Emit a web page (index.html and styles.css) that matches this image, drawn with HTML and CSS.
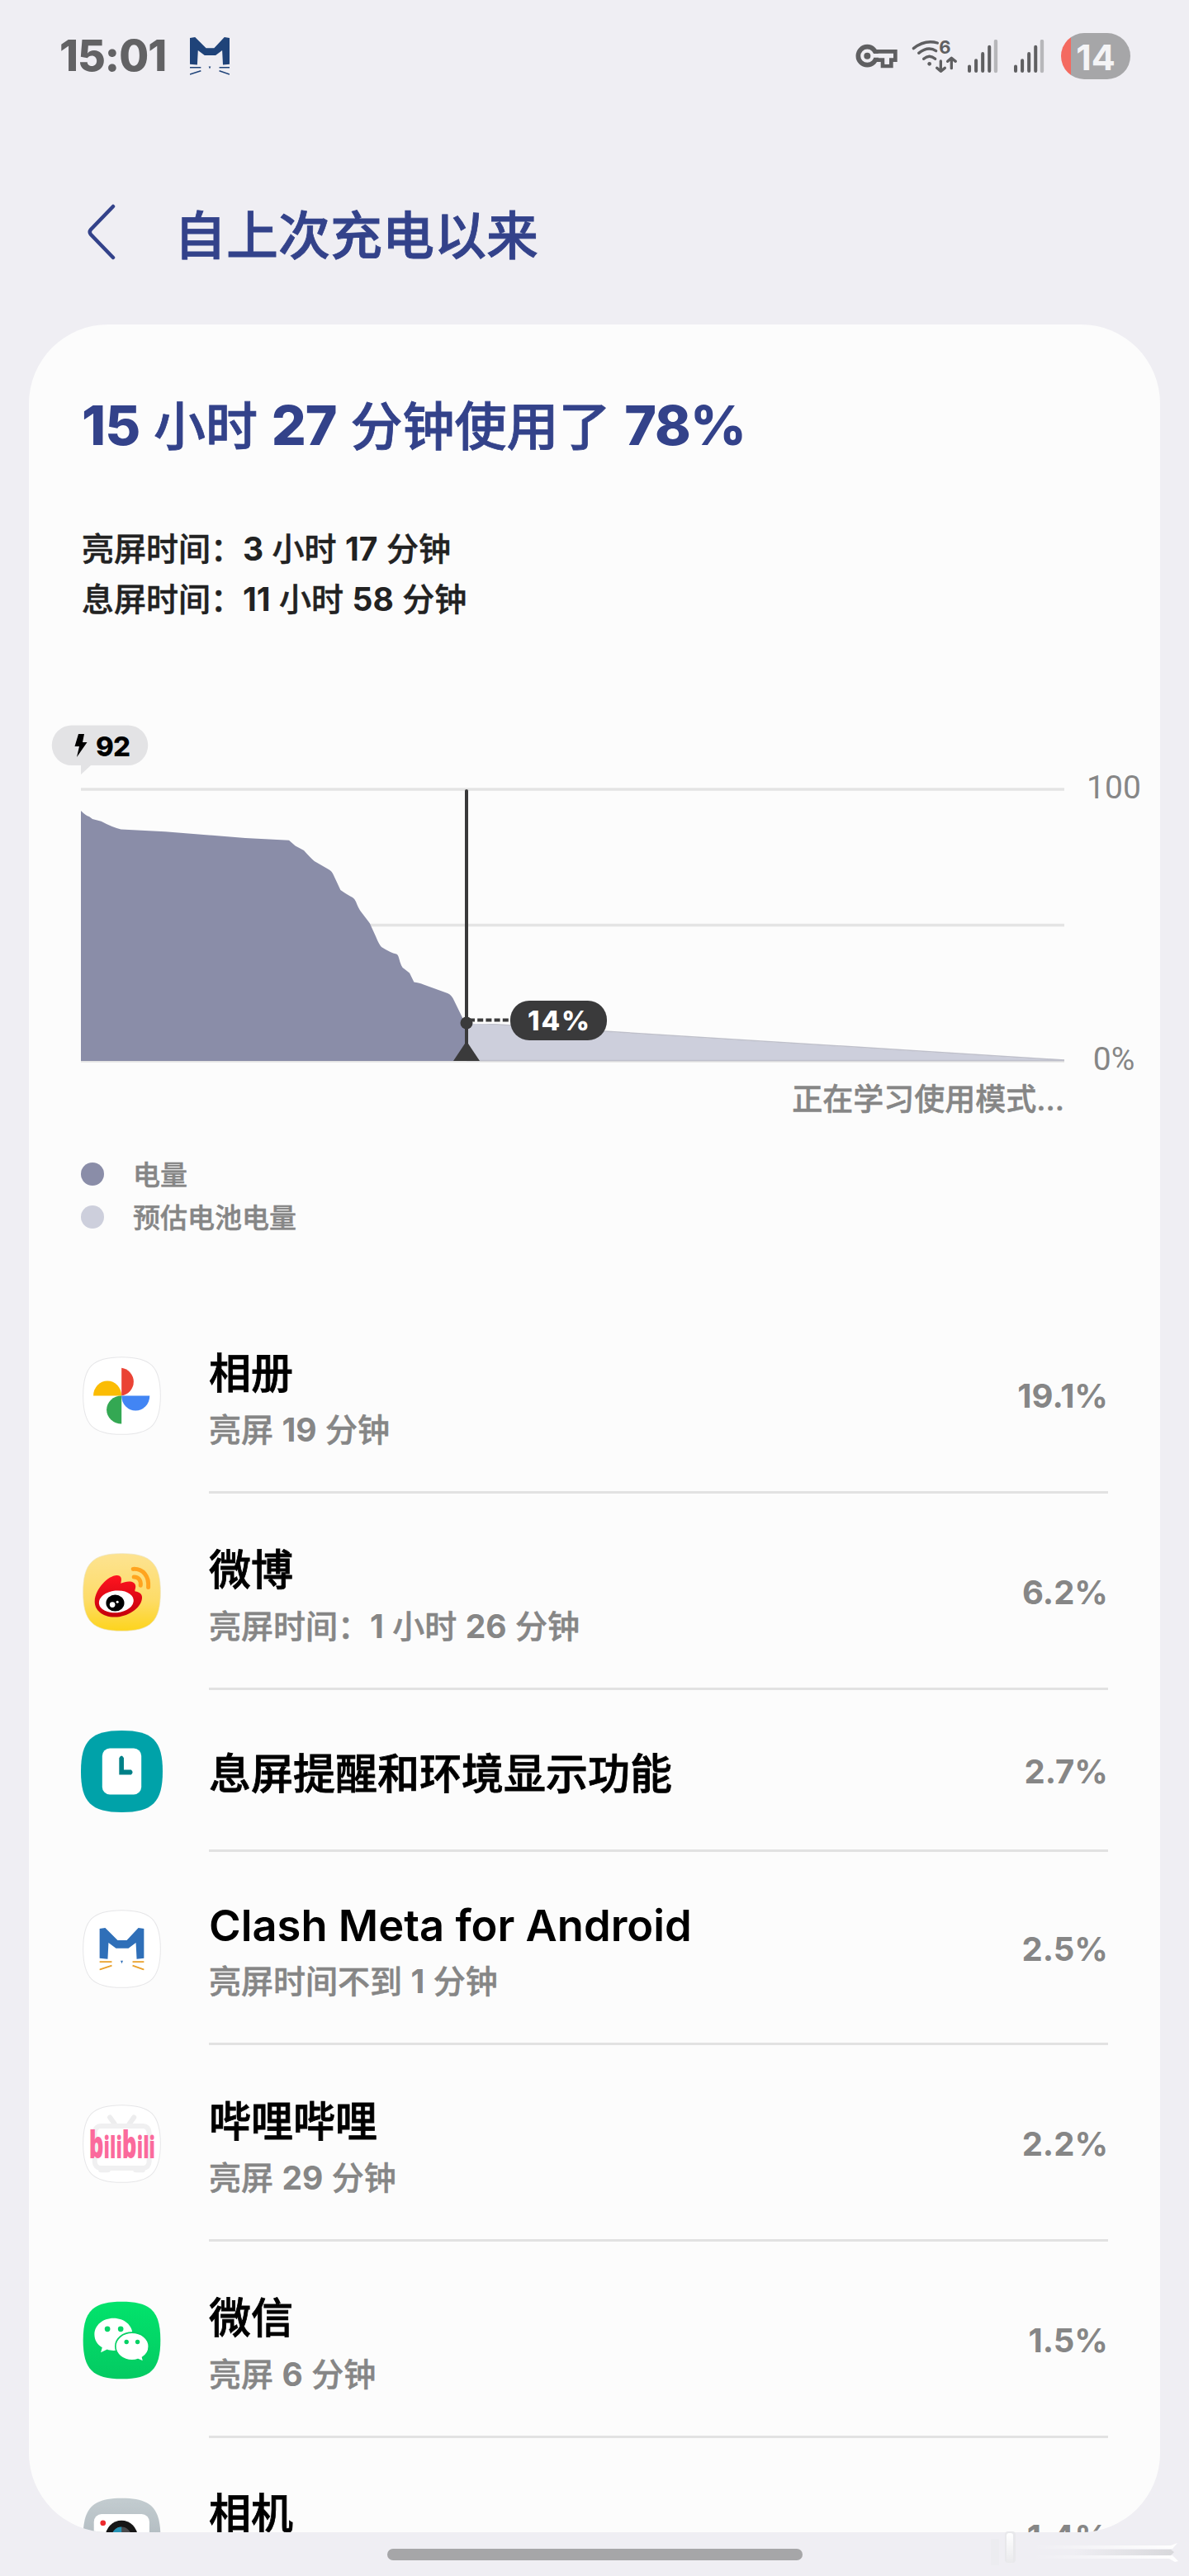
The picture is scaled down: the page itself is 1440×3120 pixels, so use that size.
FILE: index.html
```html
<!DOCTYPE html>
<html lang="zh-CN">
<head>
  <meta charset="utf-8">
  <meta name="viewport" content="width=device-width,initial-scale=1">
  <title>自上次充电以来</title>
  <link rel="stylesheet" href="styles.css">
</head>
<body>
  <!-- Shared shapes -->
  <svg class="defs" width="0" height="0">
    <defs>
      <linearGradient id="weibo-bg" x1="0" y1="0" x2="0" y2="1">
        <stop offset="0" stop-color="#fde391"/><stop offset=".6" stop-color="#fddc68"/><stop offset="1" stop-color="#fdd41c"/>
      </linearGradient>
      <linearGradient id="weibo-body" x1="0" y1="0" x2="0" y2="1">
        <stop offset="0" stop-color="#ff1420"/><stop offset="1" stop-color="#c4000c"/>
      </linearGradient>
      <linearGradient id="wechat-bg" x1="0" y1="0" x2="0" y2="1">
        <stop offset="0" stop-color="#02e36c"/><stop offset="1" stop-color="#04ca62"/>
      </linearGradient>
      <linearGradient id="camera-bg" x1="0" y1="0" x2="0" y2="1">
        <stop offset="0" stop-color="#c3ccd0"/><stop offset="1" stop-color="#a3adb3"/>
      </linearGradient>
      <symbol id="squircle" viewBox="-2 -2 284 284">
        <path d="M0 140C0 35 35 0 140 0S280 35 280 140 245 280 140 280 0 245 0 140Z"/>
      </symbol>
      <symbol id="cat" viewBox="0 0 54 52" preserveAspectRatio="none">
        <path fill="currentColor" stroke="none" d="M0 1 7 0 22 15H33L47 0 54 1V37L45 38 44 18 35 25H20L11 18 10 38 0 37ZM25.500 40H28.500L27 43.500Z"/>
        <path d="M0 41.500H15M15 46 0 51M40 41.500H54M40 46 54 51" fill="none" stroke-width="1.800"/>
      </symbol>
      <symbol id="signal" viewBox="0 0 110 122">
        <path d="M6 97V113M30 75V113M54 51V113M78 26V113" stroke="#5f5f61" stroke-width="12" stroke-linecap="round"/>
        <path d="M101 6V113" stroke="#b7b7ba" stroke-width="13" stroke-linecap="round"/>
      </symbol>
    </defs>
  </svg>

  <header class="status-bar">
    <div class="status-left">
      <span class="clock">15:01</span>
      <svg class="status-cat"><use href="#cat"/></svg>
    </div>
    <div class="status-right">
      <svg class="key" width="50" height="30" viewBox="106 100 150 90">
        <path d="M180 128H251V159H236V181H205V159H180" fill="none" stroke="#5f5f61" stroke-width="14"/>
        <circle cx="149" cy="144" r="33" fill="#efeef3" stroke="#5f5f61" stroke-width="17"/>
        <path d="M168 136H243V150H228V174H213V150H168Z" fill="#efeef3"/>
        <circle cx="149" cy="144" r="12" fill="#5f5f61"/>
      </svg>
      <svg class="wifi" width="55" height="42" viewBox="312 82 165 126" fill="none" stroke="#5f5f61" stroke-width="10" stroke-linecap="round">
        <path d="M319 117Q360 84 406 97M338 134Q372 107 401 126M356 155Q377 136 398 155"/>
        <circle cx="377" cy="173" r="7" fill="#5f5f61" stroke="none"/>
        <path d="M418 163V199M404 188 418 200 433 188M457 189V154M443 164 457 152 472 164" stroke-linejoin="round"/>
        <text x="412" y="137" class="wifi-gen">6</text>
      </svg>
      <svg class="signal" width="37" height="41"><use href="#signal"/></svg>
      <svg class="signal" width="37" height="41"><use href="#signal"/></svg>
      <div class="battery"><span>14</span></div>
    </div>
  </header>

  <div class="title-bar">
    <svg width="36" height="68" viewBox="0 0 36 68"><path d="M33 3 6 31Q3.500 34 6 37L33 65" fill="none" stroke="#33428a" stroke-width="4.500" stroke-linecap="round"/></svg>
    <h1>自上次充电以来</h1>
  </div>

  <main class="card">
    <h2><b>15</b> 小时 <b>27</b> 分钟使用了 <b>78%</b></h2>
    <div class="screen-time">
      <p>亮屏时间：<b>3</b> 小时 <b>17</b> 分钟</p>
      <p>息屏时间：<b>11</b> 小时 <b>58</b> 分钟</p>
    </div>

    <svg class="chart" width="1370" height="490" viewBox="35 870 1370 490">
      <path d="M98 956H1289M98 1120.500H1289M98 1285H1289" stroke="#e4e4e4" stroke-width="3.500"/>
      <path d="M98 982Q104 988 108 989L112 992 122.600 994.700Q136 1002 146.500 1004.400L200 1007.300 297 1015 350 1017.800 357.700 1024.600 368 1030Q376 1039 380.700 1043L398 1053Q402 1055 404 1060L412.400 1078Q421 1084 427 1087 430 1089 431 1092 434 1100 437 1104L447.700 1118 455 1134Q459 1144 462 1147 473 1154 480 1155.500 482 1156 483 1160 486 1172 489 1173L496 1178.600 501.400 1189.500Q507 1190 513 1192.500L542 1203Q547 1205 550 1212L560 1232.500 565 1239V1285H98Z" fill="#8a8da8"/>
      <path d="M565 1239 1289 1284.500V1285H565Z" fill="#cdcfdc"/>
      <path d="M565 1238.500 1289 1284M565 1284.500H1289" stroke="#bfc0cb" stroke-width="1.500"/>
      <path d="M565 958V1270" stroke="#3a3a3b" stroke-width="4" stroke-linecap="round"/>
      <path d="M549 1285 565 1261 581 1285Z" fill="#3a3a3b"/>
      <path d="M568 1235.500H618" stroke="#fcfcfc" stroke-width="9"/>
      <path d="M568 1235.500H618" stroke="#3a3a3b" stroke-width="4" stroke-dasharray="7 3.200"/>
      <circle cx="565" cy="1239" r="7.500" fill="#3a3a3b"/>
      <rect x="618" y="1212" width="117" height="48" rx="23" fill="#3a3a3b"/>
      <text class="now-label" x="676.500" y="1248" textLength="75">14%</text>
      <path d="M87 878.500H155A24 24 0 0 1 155 927H110L98 938V927H87A24 24 0 0 1 87 878.500Z" fill="#e3e3e5"/>
      <path d="M95 889H102L100 899H105.500L93 917 96 904H90.500Z"/>
      <text class="start-label" x="116" y="916" textLength="42">92</text>
      <text class="axis" x="1349" y="967">100</text>
      <text class="axis" x="1349" y="1296">0%</text>
      <text class="learning" x="1289" y="1345">正在学习使用模式...</text>
    </svg>

    <ul class="legend">
      <li><i class="dot"></i>电量</li>
      <li><i class="dot dot-light"></i>预估电池电量</li>
    </ul>

    <ul class="apps">
      <li>
        <svg class="icon" viewBox="-2 -2 284 284">
          <use href="#squircle" x="-2" y="-2" width="284" height="284" fill="#fff" stroke="#e6e6e8" stroke-width="3"/>
          <path d="M139 39A51 51 0 0 1 139 140Z" fill="#ea4335"/>
          <path d="M37 140A51 54 0 0 1 139 140Z" fill="#fbbc04"/>
          <path d="M139 140A51 54 0 0 0 241 140Z" fill="#4285f4"/>
          <path d="M139 140A54 51 0 0 0 139 242Z" fill="#34a853"/>
        </svg>
        <div class="label"><h3>相册</h3><p>亮屏 <b>19</b> 分钟</p></div>
        <span class="percent">19.1%</span>
      </li>
      <li>
        <svg class="icon" viewBox="-2 -2 284 284">
          <use href="#squircle" x="-2" y="-2" width="284" height="284" fill="url(#weibo-bg)" stroke="#ece2bb" stroke-width="2"/>
          <path d="M42 172C43 129 91 79 122 79 139 79 141 92 136 108 157 98 190 96 190 119 190 128 185 134 189 137 205 139 216 148 213 164 208 201 157 231 113 230 70 229 41 205 42 172Z" fill="url(#weibo-body)"/>
          <ellipse cx="120" cy="174" rx="63" ry="40" transform="rotate(-6 120 174)" fill="#fff"/>
          <ellipse cx="116" cy="179" rx="33" ry="30"/>
          <circle cx="106" cy="185" r="10" fill="#fff"/><circle cx="124" cy="175" r="4.500" fill="#fff"/>
          <path d="M181 56C217 54 239 82 236 122M184 85C202 85 210 98 208 115" fill="none" stroke="#ffa41f" stroke-width="15" stroke-linecap="round"/>
        </svg>
        <div class="label"><h3>微博</h3><p>亮屏时间：<b>1</b> 小时 <b>26</b> 分钟</p></div>
        <span class="percent">6.2%</span>
      </li>
      <li class="single">
        <svg class="icon icon-large" viewBox="0 0 280 280">
          <use href="#squircle" x="-2" y="-2" width="284" height="284" fill="#00a2a9"/>
          <rect x="73" y="61" width="134" height="158" rx="26" fill="#fff"/>
          <path d="M131 94Q139 79 147 94V134H172Q182 143 172 151H131Z" fill="#008087"/>
        </svg>
        <div class="label"><h3>息屏提醒和环境显示功能</h3></div>
        <span class="percent">2.7%</span>
      </li>
      <li class="latin">
        <svg class="icon" viewBox="-2 -2 284 284">
          <use href="#squircle" x="-2" y="-2" width="284" height="284" fill="#fff" stroke="#e6e6e8" stroke-width="3"/>
          <use class="icon-cat" href="#cat" x="59" y="64" width="162" height="154"/>
        </svg>
        <div class="label"><h3>Clash Meta for Android</h3><p>亮屏时间不到 <b>1</b> 分钟</p></div>
        <span class="percent">2.5%</span>
      </li>
      <li>
        <svg class="icon" viewBox="-2 -2 284 284">
          <use href="#squircle" x="-2" y="-2" width="284" height="284" fill="#fff" stroke="#e6e6e8" stroke-width="3"/>
          <path d="M97 44 114 68M184 44 167 68" stroke="#ededee" stroke-width="18" stroke-linecap="round"/>
          <rect x="42" y="76" width="197" height="152" rx="22" fill="none" stroke="#f0f0f1" stroke-width="18"/>
          <path d="M64 235H90M190 235H216" stroke="#f0f0f1" stroke-width="18" stroke-linecap="round"/>
          <text class="bili" x="21" y="192" textLength="240" lengthAdjust="spacingAndGlyphs">b<tspan class="ili">ili</tspan>b<tspan class="ili">ili</tspan></text>
        </svg>
        <div class="label"><h3>哔哩哔哩</h3><p>亮屏 <b>29</b> 分钟</p></div>
        <span class="percent">2.2%</span>
      </li>
      <li>
        <svg class="icon" viewBox="-2 -2 284 284">
          <use href="#squircle" x="-2" y="-2" width="284" height="284" fill="url(#wechat-bg)"/>
          <path d="M110 60C149 60 179 86 179 119S149 177 110 177C102 177 94 176 87 173L64 184 69 166C51 156 41 138 41 119 41 86 71 60 110 60Z" fill="#fff"/>
          <circle cx="88" cy="99" r="10" fill="#04d567"/><circle cx="136" cy="99" r="10" fill="#04d567"/>
          <path d="M177 112C144 112 117 134 117 162S144 213 177 213C184 213 192 212 199 209L219 218 215 202C230 193 238 178 238 162 238 134 211 112 177 112Z" fill="#fff" stroke="#04d164" stroke-width="5"/>
          <circle cx="157" cy="146" r="8" fill="#04d164"/><circle cx="197" cy="146" r="8" fill="#04d164"/>
        </svg>
        <div class="label"><h3>微信</h3><p>亮屏 <b>6</b> 分钟</p></div>
        <span class="percent">1.5%</span>
      </li>
      <li>
        <svg class="icon" viewBox="-2 -2 284 284">
          <use href="#squircle" x="-2" y="-2" width="284" height="284" fill="url(#camera-bg)"/>
          <rect x="39" y="58" width="201" height="164" rx="28" fill="#fff"/>
          <circle cx="72" cy="90" r="10" fill="#ed2b2f"/>
          <circle cx="139" cy="139" r="58" fill="#161616"/>
          <circle cx="139" cy="139" r="35" fill="#4a4a4c"/>
          <path d="M139 104A35 35 0 0 0 104 139H139Z" fill="#2593b5"/>
        </svg>
        <div class="label last"><h3>相机</h3></div>
        <span class="percent">1.4%</span>
      </li>
    </ul>
  </main>

  <div class="nav-handle"></div>
  <svg class="streak" width="250" height="50" viewBox="0 0 250 50">
    <defs>
      <linearGradient id="fade" x1="0" y1="0" x2="1" y2="0"><stop offset="0" stop-color="#fff" stop-opacity="0"/><stop offset="1" stop-color="#fff"/></linearGradient>
      <linearGradient id="shade" x1="0" y1="0" x2="1" y2="0"><stop offset=".3" stop-color="#d8d8db" stop-opacity="0"/><stop offset="1" stop-color="#d8d8db"/></linearGradient>
      <linearGradient id="drop" x1="0" y1="0" x2="0" y2="1"><stop offset="0" stop-color="#fff"/><stop offset="1" stop-color="#fff" stop-opacity="0"/></linearGradient>
    </defs>
    <rect x="20" y="9" width="10" height="32" fill="#ececf0"/>
    <rect x="37" y="0" width="13" height="38" rx="4" fill="#e8e8eb"/>
    <rect x="39" y="2" width="8" height="38" rx="3" fill="url(#drop)"/>
    <path d="M70 22H238L242 25 238 29H70Z" fill="url(#shade)"/>
    <path d="M70 17H238L246 14 240 21H70ZM70 29H240L247 36 243 37 236 33H70Z" fill="url(#fade)"/>
  </svg>
</body>
</html>
```
FILE: styles.css
```css
:root {
  --bg: #efeef3;
  --accent: #33428a;
  --muted: #868686;
  --line: #e2e2e2;
}
* {
  box-sizing: border-box;
}
body {
  margin: 0;
  height: 3120px;
  position: relative;
  overflow: hidden;
  background: var(--bg);
  font-family: Inter, "Noto Sans CJK SC", sans-serif;
  font-weight: 500;
}
h1, h2, h3, p, ul {
  margin: 0;
  padding: 0;
  font-weight: 500;
  white-space: nowrap;
}
/* Medium weight for the Chinese glyphs */
h1, h2, h3 {
  -webkit-text-stroke: 0.8px;
}
p, .legend {
  -webkit-text-stroke: 0.5px;
}
ul {
  list-style: none;
}
svg {
  display: block;
  flex: none;
  overflow: visible;
}
.defs {
  position: absolute;
}

/* status bar */
.status-bar {
  height: 136px;
  padding: 0 71px;
  display: flex;
  justify-content: space-between;
  align-items: center;
}
.status-left, .status-right {
  display: flex;
  align-items: center;
}
.clock {
  width: 135px;
  margin-left: 1px;
  font-size: 52px;
  font-weight: 800;
  letter-spacing: -1px;
  line-height: 60px;
  color: #626264;
}
.status-cat {
  width: 48px;
  height: 46px;
  margin-left: 23px;
  color: #1f4379;
  stroke: #1f4379;
}
.wifi {
  margin-left: 18px;
}
.wifi-gen {
  font-size: 66px;
  font-weight: 700;
  fill: #5f5f61;
  stroke: none;
}
.signal {
  margin-left: 13px;
}
.signal + .signal {
  margin-left: 19px;
}
.battery {
  width: 84px;
  height: 56px;
  margin-left: 20px;
  border-radius: 28px;
  background: linear-gradient(to right, #f46a60 12px, #a6a6a8 12px);
  color: #f4f4f6;
  font-size: 43px;
  font-weight: 700;
  line-height: 58px;
  text-align: center;
}

.title-bar {
  height: 257px;
  padding: 0 0 0 104px;
  display: flex;
  align-items: flex-start;
  color: var(--accent);
}
.title-bar svg {
  margin-top: 111px;
}
.title-bar h1 {
  margin: 109px 0 0 71px;
  font-size: 63px;
  line-height: 80px;
}

/* card */
.card {
  height: 2674px;
  margin: 0 35px;
  padding: 83px 63px 0 64px;
  overflow: hidden;
  border-radius: 96px;
  background: #fcfcfc;
}
h2 {
  height: 80px;
  font-size: 63px;
  line-height: 80px;
  color: var(--accent);
}
h2 b {
  font-size: 66px;
  line-height: 1;
  letter-spacing: -1px;
}
.screen-time {
  margin-top: 78px;
  font-size: 39px;
  line-height: 61px;
  color: #222;
}
b {
  font-weight: 700;
  -webkit-text-stroke: 0;
}
h2 b {
  font-weight: 800;
}
.chart {
  margin: 114px 0 0 -64px;
}
.now-label, .start-label {
  font-size: 33px;
  font-weight: 800;
}
.now-label {
  fill: #fff;
  text-anchor: middle;
}
.axis {
  font-family: Roboto, sans-serif;
  font-size: 39px;
  font-weight: 400;
  fill: var(--muted);
  text-anchor: middle;
}
.learning {
  font-size: 37px;
  fill: var(--muted);
  stroke: var(--muted);
  stroke-width: 0.5px;
  text-anchor: end;
}
.legend {
  margin-top: 37px;
  font-size: 33px;
  line-height: 58px;
  color: var(--muted);
}
.legend li {
  height: 52px;
  display: flex;
  align-items: center;
}
.dot {
  width: 28px;
  height: 28px;
  margin: 0 35px 2px -1px;
  border-radius: 50%;
  background: #8a8da8;
}
.dot-light {
  background: #cdcfdc;
}

/* app list */
.apps {
  margin-top: 70px;
}
.apps li {
  height: 238px;
  display: flex;
  align-items: center;
}
.apps .single {
  height: 196px;
}
.apps .latin {
  height: 234px;
}
.icon {
  width: 95px;
  height: 95px;
  margin: 0 58px 0 1px;
}
.icon-large {
  width: 99px;
  height: 99px;
  margin: 0 56px 0 -1px;
}
.icon-cat {
  color: #2f6fb8;
  stroke: #e9a02a;
}
.bili {
  font-family: "Open Sans", sans-serif;
  font-size: 136px;
  font-weight: 800;
  fill: #fb6a9c;
}
.ili {
  font-size: 112px;
}
.label {
  height: 100%;
  flex: 1;
  padding-top: 15px;
  display: flex;
  flex-direction: column;
  justify-content: center;
  border-bottom: 3px solid var(--line);
}
.label h3 {
  font-size: 51px;
  line-height: 71px;
  color: #000;
}
.single .label {
  padding-top: 9px;
}
.latin .label {
  padding-top: 12px;
}
.last {
  padding: 61px 0 0;
  justify-content: flex-start;
}
.label.last {
  padding-top: 56px;
}
.latin h3 {
  font-size: 52.500px;
  font-weight: 600;
  line-height: 69px;
  -webkit-text-stroke: 0;
}
.label p {
  font-size: 39px;
  line-height: 65px;
  color: var(--muted);
}
.percent {
  height: 100%;
  padding-top: 3px;
  display: flex;
  align-items: center;
  border-bottom: 3px solid var(--line);
  font-size: 40px;
  font-weight: 700;
  color: var(--muted);
}

.nav-handle {
  width: 503px;
  height: 14px;
  margin: 20px auto 0;
  border-radius: 7px;
  background: #a6a6a8;
}
.streak {
  position: absolute;
  left: 1180px;
  top: 3066px;
}
```
